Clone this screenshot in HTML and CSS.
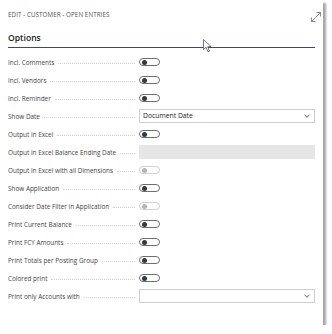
FILE: index.html
```html
<!DOCTYPE html>
<html lang="en">
<head>
    <meta charset="UTF-8">
    <title>Edit - Customer - Open Entries</title>
    <link rel="stylesheet" href="styles.css">
</head>
<body>
    <div class="dialog">
        <div class="caption">EDIT - CUSTOMER - OPEN ENTRIES</div>
        <svg class="expand" width="12" height="12" viewBox="0 0 12 12">
            <path d="M1.5 10.5 L10.5 1.5 M6.5 1.5 H10.5 V5.5 M1.5 6.5 V10.5 H5.5" fill="none" stroke="#8a8a8a" stroke-width="1"/>
        </svg>

        <h2 class="group">Options</h2>

        <div class="fields">
            <div class="row"><span class="label">Incl. Comments</span><span class="toggle"></span></div>
            <div class="row"><span class="label">Incl. Vendors</span><span class="toggle"></span></div>
            <div class="row"><span class="label">Incl. Reminder</span><span class="toggle"></span></div>
            <div class="row"><span class="label">Show Date</span><div class="select">Document Date<span class="chevron"></span></div></div>
            <div class="row"><span class="label">Output in Excel</span><span class="toggle"></span></div>
            <div class="row"><span class="label">Output in Excel Balance Ending Date</span><div class="input disabled"></div></div>
            <div class="row"><span class="label">Output in Excel with all Dimensions</span><span class="toggle off"></span></div>
            <div class="row"><span class="label">Show Application</span><span class="toggle"></span></div>
            <div class="row"><span class="label">Consider Date Filter in Application</span><span class="toggle off"></span></div>
            <div class="row"><span class="label">Print Current Balance</span><span class="toggle"></span></div>
            <div class="row"><span class="label">Print FCY Amounts</span><span class="toggle"></span></div>
            <div class="row"><span class="label">Print Totals per Posting Group</span><span class="toggle"></span></div>
            <div class="row"><span class="label">Colored print</span><span class="toggle"></span></div>
            <div class="row"><span class="label">Print only Accounts with</span><div class="select"><span class="chevron"></span></div></div>
        </div>

        <!-- mouse pointer captured in the shot -->
        <svg class="pointer" width="10" height="14" viewBox="0 0 10 14">
            <path d="M0.5 0.5 L0.5 10.5 L3 8.3 L5 12.8 L6.6 12.1 L4.7 7.7 L8 7.5 Z" fill="#fff" stroke="#555" stroke-width="0.8"/>
        </svg>
    </div>
</body>
</html>
```

FILE: styles.css
```css
* {
    margin: 0;
    padding: 0;
    box-sizing: border-box;
}

body {
    font-family: "Open Sans", "Noto Sans", sans-serif;
    background: #fff;
    color: #333;
}

.dialog {
    position: relative;
    margin-left: 4px;
    width: 319px;
    height: 325px;
    background: #fff;
    box-shadow: 3px 3px 2px rgba(0, 0, 0, 0.35);
    padding: 0 8px 0 4px;
}

.caption {
    padding-top: 11px;
    font-size: 6.2px;
    letter-spacing: 0.1px;
    color: #505050;
    line-height: 8px;
}

.expand {
    position: absolute;
    top: 11px;
    right: 1px;
}

.group {
    margin-top: 13px;
    font-size: 8.6px;
    font-weight: 600;
    color: #222;
    line-height: 12px;
    padding-bottom: 3px;
    border-bottom: 1px solid #3d4a60;
}

.fields {
    margin-top: 5px;
}

.row {
    display: flex;
    align-items: center;
    height: 18px;
}

.label {
    width: 131px;
    flex: none;
    display: flex;
    align-items: baseline;
    font-size: 6.4px;
    color: #444;
    white-space: nowrap;
}

.label::after {
    content: "";
    flex: 1;
    margin: 0 4px 0 4px;
    border-bottom: 1px dotted #d2d2d2;
    transform: translateY(-1px);
}

.toggle {
    position: relative;
    width: 21px;
    height: 8px;
    border: 1px solid #6e6e6e;
    border-radius: 4px;
}

.toggle::before {
    content: "";
    position: absolute;
    left: 2px;
    top: 0.5px;
    width: 5px;
    height: 5px;
    border-radius: 50%;
    background: #2f394b;
}

.toggle.off {
    border-color: #d0d0d0;
}

.toggle.off::before {
    background: #b4b4b4;
}

.select {
    position: relative;
    flex: 1;
    height: 14px;
    border: 1px solid #cfcfcf;
    font-size: 6.8px;
    color: #222;
    line-height: 12px;
    padding-left: 3px;
}

.chevron {
    position: absolute;
    right: 5px;
    top: 3px;
    width: 4px;
    height: 4px;
    border-right: 1px solid #8a8a8a;
    border-bottom: 1px solid #8a8a8a;
    transform: rotate(45deg);
}

.input {
    flex: 1;
    height: 14px;
}

.input.disabled {
    background: #e6e6e6;
}

.pointer {
    position: absolute;
    left: 199px;
    top: 39px;
}
```
